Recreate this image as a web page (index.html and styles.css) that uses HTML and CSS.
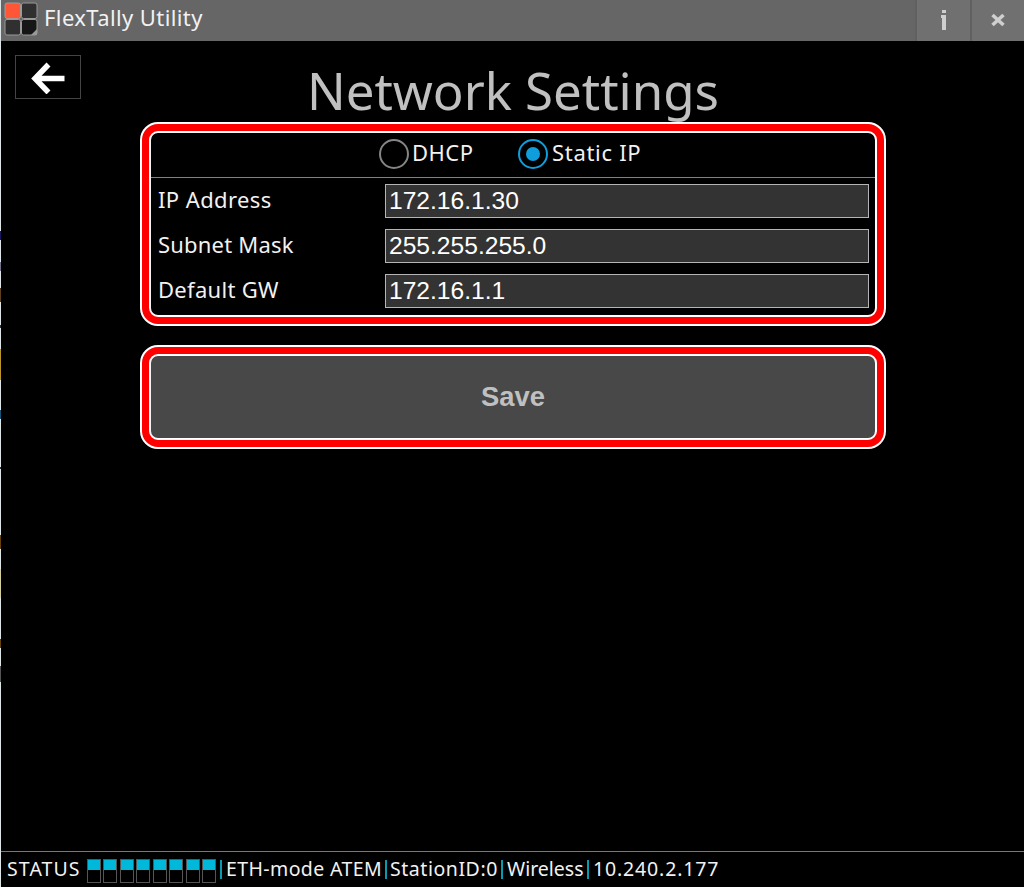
FILE: index.html
```html
<!DOCTYPE html>
<html lang="en">
<head>
<meta charset="utf-8">
<title>FlexTally Utility</title>
<link rel="stylesheet" href="styles.css">
</head>
<body>
<div class="window">
  <header class="titlebar">
    <svg class="logo" width="34" height="34" viewBox="0 0 34 34">
      <rect x="1" y="1" width="15.5" height="15.5" rx="2" fill="#ff5638" stroke="#a39a98"/>
      <rect x="17.5" y="1" width="15.5" height="15.5" rx="2" fill="#303030" stroke="#999"/>
      <rect x="1" y="17.5" width="15.5" height="15.5" rx="2" fill="#303030" stroke="#999"/>
      <rect x="17.5" y="17.5" width="15.5" height="15.5" rx="2" fill="#161616" stroke="#999"/>
      <path d="M33 27v6h-6z" fill="#999"/>
    </svg>
    <span class="app-name">FlexTally Utility</span>
    <button class="tool info" aria-label="Info"><svg width="8" height="22" viewBox="0 0 8 22"><path d="M2 1h4v3H2zM1 6h5v15H2V9H1z" fill="#cfcfcf"/></svg></button>
    <button class="tool close" aria-label="Close"><svg width="14" height="14" viewBox="0 0 14 14"><path d="M1.500 2l11 10M12.500 2l-11 10" stroke="#cfcfcf" stroke-width="3.600"/></svg></button>
  </header>
  <main class="page">
    <div class="heading">
      <button class="back" aria-label="Back"><svg width="34" height="32" viewBox="0 0 34 32"><path d="M17.500 2.500L4 16.500L17.500 30.500M5 16.500H33.500" fill="none" stroke="#fff" stroke-width="5.500"/></svg></button>
      <h1 class="title">Network Settings</h1>
    </div>
    <section class="frame settings">
      <div class="frame-inner">
        <div class="modes">
          <span class="radio"></span><span class="mode-label dhcp">DHCP</span>
          <span class="radio selected"></span><span class="mode-label static">Static IP</span>
        </div>
        <div class="row"><label class="label ip">IP Address</label><div class="field">172.16.1.30</div></div>
        <div class="row"><label class="label mask">Subnet Mask</label><div class="field">255.255.255.0</div></div>
        <div class="row"><label class="label gw">Default GW</label><div class="field">172.16.1.1</div></div>
      </div>
    </section>
    <section class="frame save">
      <button class="frame-inner save-button">Save</button>
    </section>
  </main>
  <footer class="status">
    <span class="status-name">STATUS</span>
    <div class="cells"><i></i><i></i><i></i><i></i><i></i><i></i><i></i><i></i></div>
    <b class="bar"></b><span class="eth">ETH-mode ATEM</span>
    <b class="bar"></b><span class="station">StationID:0</span>
    <b class="bar"></b><span class="wireless">Wireless</span>
    <b class="bar"></b><span class="address">10.240.2.177</span>
  </footer>
</div>
</body>
</html>
```
FILE: styles.css
```css
* { box-sizing: border-box; }
body {
  margin: 0;
  padding-left: 1px;
  background: linear-gradient(#dde5e6 0 231px, #1a145a 231px 240px, #dde5e6 240px 262px, #77728c 262px 271px, #dde5e6 271px 288px, #60401c 288px 302px, #dde5e6 302px 325px, #333 325px 328px, #dde5e6 328px 349px, #bd962b 349px 380px, #dde5e6 380px 410px, #185375 410px 419px, #dde5e6 419px 467px, #333 467px 469px, #dde5e6 469px 535px, #67400f 535px 549px, #dde5e6 549px 569px, #d5cf9c 569px 598px, #dde5e6 598px 639px, #67400f 639px 648px, #dde5e6 648px 666px, #555 666px 682px, #dde5e6 682px);
  font-family: "Noto Sans", sans-serif;
  color: #f2f2f2;
}
button { padding: 0; border: 0; border-radius: 0; color: inherit; font: inherit; }
.window { display: flex; flex-direction: column; height: 887px; background: #000; }
.titlebar { display: flex; height: 41px; padding-left: 3px; background: #666; }
.logo { flex: none; margin-top: 2px; }
.app-name { flex: 1; padding-left: 6px; font-size: 22px; letter-spacing: .4px; line-height: 35px; white-space: nowrap; }
.tool { display: flex; align-items: center; justify-content: center; height: 41px; padding-bottom: 2px; background: #707070; border-left: 2px solid #606060; }
.info { width: 55px; }
.close { width: 54px; }
.page { flex: 1; }
.heading { display: flex; height: 81px; }
.back { display: flex; align-items: center; justify-content: center; width: 66px; height: 44px; margin: 14px 0 0 14px; background: #000; border: 1px solid #444; }
.back svg { margin-top: 2px; }
.title { margin: 14px 0 0 226px; font-size: 51px; font-weight: 400; line-height: 70px; letter-spacing: -.04px; color: #c0c0c0; white-space: nowrap; }
.frame { width: 746px; margin-left: 139px; padding: 7px; background: #f00; border: 2px solid #fff; border-radius: 18px; }
.frame-inner { width: 100%; height: 100%; border: 2px solid #fff; border-radius: 9px; background: #000; overflow: hidden; }
.settings { height: 204px; }
.modes { display: flex; align-items: center; height: 45px; padding: 0 0 4px 228px; border-bottom: 1px solid #1ca8c0; font-size: 22px; white-space: nowrap; }
.radio { display: flex; align-items: center; justify-content: center; flex: none; width: 30px; height: 30px; margin-top: 2px; border: 2px solid #858585; border-radius: 50%; }
.radio.selected { border-color: #0f9ddb; }
.radio.selected::after { content: ""; width: 14px; height: 14px; border-radius: 50%; background: #0f9ddb; }
.mode-label { line-height: 30px; margin-top: -2px; }
.dhcp { width: 109px; padding-left: 3px; letter-spacing: .5px; }
.static { padding-left: 4px; letter-spacing: .7px; }
.row { display: flex; height: 34px; margin: 6px 6px 11px 7px; }
.row + .row { margin-top: 0; }
.label { width: 227px; font-size: 22px; line-height: 31px; white-space: nowrap; }
.ip { letter-spacing: .4px; }
.mask { letter-spacing: .2px; }
.gw { letter-spacing: .3px; }
.field { width: 484px; padding-left: 3px; background: #333; border: 1px solid #b5b5b5; font: 24.6px/32px "Liberation Sans", Arial, sans-serif; color: #fff; }
.save { height: 104px; margin-top: 19px; }
.save-button { display: block; background: #484848; color: #c0c0c0; font: bold 27.4px "Liberation Sans", Arial, sans-serif; }
.status { display: flex; height: 36px; padding: 0 0 0 6px; border-top: 1px solid #777; font-size: 19.5px; line-height: 34px; white-space: nowrap; }
.status span { flex: none; }
.status-name { width: 80px; letter-spacing: 1.1px; }
.cells { display: flex; justify-content: space-between; width: 129px; height: 24px; margin: 7px 4px 0 0; }
.cells i { width: 14px; height: 24px; border: 1px solid #555; background: linear-gradient(#00b8da 0 10px, #000 10px); }
.bar { width: 2px; height: 19px; margin-top: 8px; background: #079bae; }
.eth { width: 163px; padding-left: 4px; letter-spacing: .4px; }
.station { width: 114px; padding-left: 3px; letter-spacing: .55px; }
.wireless { width: 84px; padding-left: 4px; }
.address { padding-left: 4px; letter-spacing: .85px; }
```
